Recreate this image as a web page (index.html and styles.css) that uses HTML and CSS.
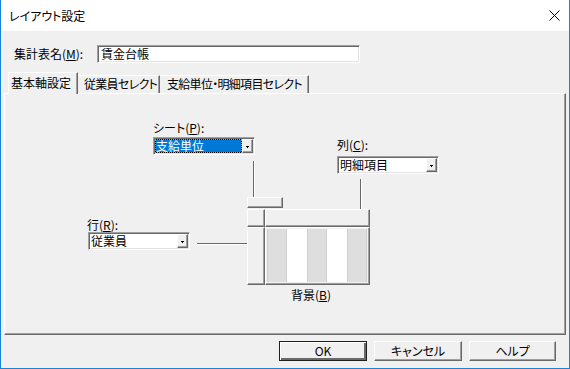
FILE: index.html
```html
<!DOCTYPE html>
<html>
<head>
  <meta charset="utf-8">
  <meta name="viewport" content="width=device-width">
  <title>レイアウト設定</title>
  <link rel="stylesheet" href="styles.css">
</head>
<body>
<div class="window">
  <div class="titlebar">
    <span class="title">レイアウト設定</span>
    <svg class="close" width="11" height="11" viewBox="0 0 11 11"><path d="M0.5 0.5L10.5 10.5M10.5 0.5L0.5 10.5" stroke="#000" stroke-width="1" fill="none"/></svg>
  </div>
  <div class="content">
    <div class="name-row">
      <label class="name-label">集計表名(<u>M</u>):</label>
      <div class="textbox">賃金台帳</div>
    </div>
    <div class="tabs">
      <div class="tab active">基本軸設定</div>
      <div class="tab second">従業員セレクト</div>
      <div class="tab third">支給単位・明細項目セレクト</div>
    </div>
    <div class="panel">
      <!-- sheet -->
      <div class="lbl lbl-sheet">シート(<u>P</u>):</div>
      <div class="combo combo-sheet">
        <span class="value selected">支給単位</span>
        <span class="drop"><svg width="3" height="2" viewBox="0 0 3 2"><path d="M0 0h3v1H0zM1 1h1v1H1z" fill="#000"/></svg></span>
      </div>
      <div class="vline vline-sheet"></div>
      <div class="sheet-tab"></div>

      <!-- column -->
      <div class="lbl lbl-col">列(<u>C</u>):</div>
      <div class="combo combo-col">
        <span class="value">明細項目</span>
        <span class="drop"><svg width="3" height="2" viewBox="0 0 3 2"><path d="M0 0h3v1H0zM1 1h1v1H1z" fill="#000"/></svg></span>
      </div>
      <div class="vline vline-col"></div>

      <!-- row -->
      <div class="lbl lbl-row">行(<u>R</u>):</div>
      <div class="combo combo-row">
        <span class="value">従業員</span>
        <span class="drop"><svg width="3" height="2" viewBox="0 0 3 2"><path d="M0 0h3v1H0zM1 1h1v1H1z" fill="#000"/></svg></span>
      </div>
      <div class="hline hline-row"></div>

      <!-- preview grid -->
      <div class="grid">
        <div class="cell"></div>
        <div class="cell"></div>
        <div class="cell"></div>
        <div class="cell data">
          <div class="stripe gray"></div>
          <div class="stripe"></div>
          <div class="stripe gray"></div>
          <div class="stripe"></div>
          <div class="stripe gray"></div>
        </div>
      </div>
      <div class="lbl lbl-bg">背景(<u>B</u>)</div>
    </div>
    <div class="buttons">
      <div class="btn default">OK</div>
      <div class="btn">キャンセル</div>
      <div class="btn help">ヘルプ</div>
    </div>
  </div>
</div>
</body>
</html>
```

FILE: styles.css
```css
html, body {
  margin: 0;
  padding: 0;
}
body {
  width: 570px;
  height: 369px;
  background: #f0f0f0;
  font: 12px/14px "Noto Sans CJK JP", "Liberation Sans", sans-serif;
  font-feature-settings: "palt";
  color: #000;
  overflow: hidden;
}
u {
  text-decoration: underline;
  text-underline-offset: 1px;
}
.window {
  width: 570px;
  height: 369px;
  box-sizing: border-box;
  border: 1px solid #1883d7;
  border-top: none;
  display: flex;
  flex-direction: column;
}
.titlebar {
  height: 31px;
  flex: none;
  background: #fff;
  display: flex;
  align-items: center;
  padding-left: 8px;
}
.title {
  font-size: 12px;
}
.close {
  margin-left: auto;
  margin-right: 9px;
}
.content {
  padding: 0 3px;
  display: flex;
  flex-direction: column;
}
.name-row {
  margin-top: 14px;
  height: 18px;
  display: flex;
  align-items: center;
  padding-left: 10px;
}
.name-label {
  width: 83px;
}
.textbox {
  width: 263px;
  height: 18px;
  box-sizing: border-box;
  border: 1px solid;
  border-color: #a0a0a0 #fff #fff #a0a0a0;
  box-shadow: inset 1px 1px #696969, inset -1px -1px #e3e3e3;
  background: #fff;
  padding: 1px 3px;
  line-height: 14px;
}
.tabs {
  margin-top: 9px;
  height: 21px;
  display: flex;
  align-items: flex-end;
  padding-left: 4px;
  position: relative;
  z-index: 1;
}
.tab {
  height: 18px;
  box-sizing: border-box;
  line-height: 16px;
  border-top: 1px solid #fff;
  border-right: 1px solid #696969;
  box-shadow: inset -1px 0 #a0a0a0;
  white-space: nowrap;
  overflow: hidden;
  letter-spacing: -0.7px;
}
.tab.active {
  width: 70px;
  height: 22px;
  margin-bottom: -1px;
  border-left: 1px solid #fff;
  padding: 2px 0 0 2px;
  background: #f0f0f0;
  letter-spacing: 0;
}
.tab.second {
  width: 82px;
  padding-left: 6px;
}
.tab.third {
  width: 149px;
  padding-left: 7px;
}
.panel {
  width: 562px;
  height: 242px;
  box-sizing: border-box;
  border: 1px solid;
  border-color: #fff #696969 #696969 #fff;
  box-shadow: inset -1px -1px #a0a0a0;
  position: relative;
}
.lbl {
  position: absolute;
  white-space: nowrap;
}
.lbl-sheet { left: 148px; top: 27px; }
.lbl-col { left: 332px; top: 44px; }
.lbl-row { left: 82px; top: 124px; }
.lbl-bg { left: 286px; top: 194px; }

.combo {
  position: absolute;
  width: 102px;
  height: 18px;
  box-sizing: border-box;
  border: 1px solid;
  border-color: #a0a0a0 #fff #fff #a0a0a0;
  box-shadow: inset 1px 1px #696969, inset -1px -1px #e3e3e3;
  background: #fff;
  padding: 1px;
  display: flex;
}
.combo-sheet { left: 148px; top: 43px; }
.combo-col { left: 332px; top: 62px; }
.combo-row { left: 83px; top: 138px; }
.value {
  flex: 1;
  line-height: 14px;
  padding-left: 1px;
  white-space: nowrap;
}
.value.selected {
  padding-left: 0;
  line-height: 12px;
  color: #fff;
  border: 1px dotted #ff8728;
  background: linear-gradient(#0078d7, #0078d7) padding-box, #000 border-box;
}
.drop {
  width: 11px;
  flex: none;
  box-sizing: border-box;
  border: 1px solid;
  border-color: #fff #696969 #696969 #fff;
  box-shadow: inset -1px -1px #a0a0a0;
  background: #f0f0f0;
  display: flex;
  align-items: center;
  justify-content: center;
}
.drop svg {
  display: block;
  margin-top: 1px;
}
.vline {
  position: absolute;
  width: 1px;
  background: #696969;
  box-shadow: 1px 0 #fff;
}
.vline-sheet { left: 248px; top: 67px; height: 36px; }
.vline-col { left: 355px; top: 85px; height: 30px; }
.hline {
  position: absolute;
  height: 1px;
  background: #696969;
  box-shadow: 0 1px #fff;
}
.hline-row { left: 192px; top: 149px; width: 50px; }
.sheet-tab {
  position: absolute;
  left: 242px;
  top: 103px;
  width: 36px;
  height: 11px;
  box-sizing: border-box;
  border: 1px solid;
  border-color: #fff #696969 #696969 #fff;
  box-shadow: inset -1px -1px #a0a0a0;
}
.grid {
  position: absolute;
  left: 242px;
  top: 115px;
  display: grid;
  grid-template-columns: 18px 105px;
  grid-template-rows: 18px 58px;
}
.cell {
  box-sizing: border-box;
  border: 1px solid;
  border-color: #fff #696969 #696969 #fff;
  box-shadow: inset -1px -1px #a0a0a0;
}
.cell.data {
  display: flex;
  padding: 1px 2px 2px 1px;
}
.stripe {
  flex: 1;
  background: #fff;
}
.stripe.gray {
  background: #dedede;
  box-shadow: inset 1px 0 #cfcfcf, inset -1px 0 #cfcfcf;
}
.buttons {
  margin-top: 6px;
  display: flex;
  justify-content: flex-end;
  gap: 7px;
  padding-right: 10px;
}
.btn {
  width: 88px;
  height: 20px;
  box-sizing: border-box;
  border: 1px solid;
  border-color: #fff #696969 #696969 #fff;
  box-shadow: inset -1px -1px #a0a0a0;
  background: #f0f0f0;
  text-align: center;
  line-height: 18px;
}
.btn.help {
  width: 87px;
}
.btn.default {
  border: 1px solid #1e1e1e;
  box-shadow: inset 1px 1px #fff, inset -2px -2px #696969;
}
```
